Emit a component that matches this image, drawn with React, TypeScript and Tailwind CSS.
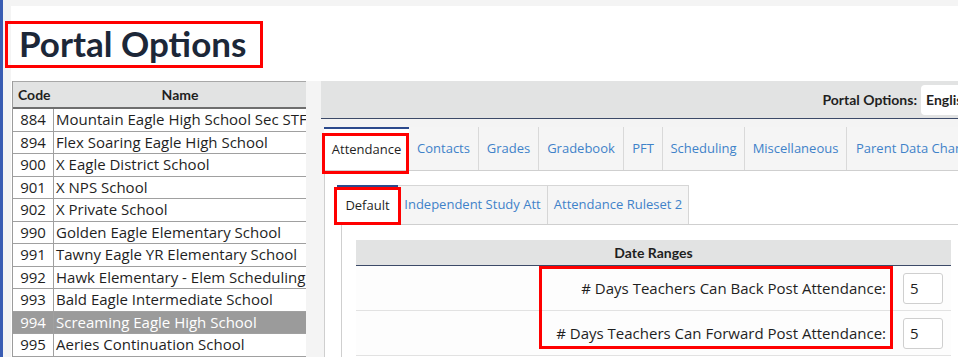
import React from "react";

const schools: [string, string][] = [
  ["884", "Mountain Eagle High School Sec STF"],
  ["894", "Flex Soaring Eagle High School"],
  ["900", "X Eagle District School"],
  ["901", "X NPS School"],
  ["902", "X Private School"],
  ["990", "Golden Eagle Elementary School"],
  ["991", "Tawny Eagle YR Elementary School"],
  ["992", "Hawk Elementary - Elem Scheduling"],
  ["993", "Bald Eagle Intermediate School"],
  ["994", "Screaming Eagle High School"],
  ["995", "Aeries Continuation School"],
];

const tabs: [string, string][] = [
  ["Contacts", "w-[70px] justify-center"],
  ["Grades", "w-[60px] justify-center"],
  ["Gradebook", "w-[85px] justify-center"],
  ["PFT", "w-[39px] justify-center"],
  ["Scheduling", "w-[82px] justify-center"],
  ["Miscellaneous", "w-[102px] justify-center"],
  ["Parent Data Changes", "w-[140px] justify-start pl-[9px]"],
];

const lato = { fontFamily: "Lato, 'Open Sans', sans-serif" };

export default function App() {
  return (
    <div
      className="w-[958px] h-[357px] overflow-hidden bg-[#f4f4f4] flex text-[#1f1f1f]"
      style={{ fontFamily: "'Open Sans', 'Noto Sans', sans-serif" }}
    >
      <div className="w-[3px] shrink-0 bg-[#3a5db3]" />
      <div className="flex-1 pl-[8px] pt-[6px] flex flex-col min-w-0">
        {/* Title */}
        <div className="h-[75px] bg-white relative shrink-0">
          <h1
            className="absolute left-[8px] top-[17px] text-[35px] leading-[40px] font-bold text-[#1c2738]"
            style={lato}
          >
            Portal Options
          </h1>
          <div className="absolute left-[-6px] top-[15px] w-[258px] h-[47px] border-[3px] border-[#ff0000]" />
        </div>
        <div className="flex flex-1 min-h-0">
          {/* School table */}
          <div className="w-[295px] shrink-0 bg-white pl-[1px]">
            <div className="border-l border-[#9c9c9c] text-[15px]">
              <div
                className="flex h-[28px] bg-[#e2e3e3] border-t border-b-[2px] border-t-[#a8a8a8] border-b-[#6e6e6e] font-bold text-[14px]"
                style={lato}
              >
                <div className="w-[41px] pl-[5px] flex items-center">Code</div>
                <div className="flex-1 flex items-center justify-center">Name</div>
              </div>
              {schools.map(([code, name]) => {
                const sel = code === "994";
                return (
                  <div
                    key={code}
                    className={`flex h-[22.5px] border-b border-[#a0a0a0] ${
                      sel ? "bg-[#9b9b9b] text-white" : "bg-white"
                    }`}
                  >
                    <div className="w-[41px] shrink-0 border-r border-[#a0a0a0] flex items-center justify-center leading-none">
                      {code}
                    </div>
                    <div className="flex-1 pl-[2px] flex items-center whitespace-nowrap overflow-hidden leading-none">
                      {name}
                    </div>
                  </div>
                );
              })}
            </div>
          </div>
          <div className="w-[15px] shrink-0 bg-[#f4f4f4]" />
          {/* Right panel */}
          <div className="flex-1 min-w-0 flex flex-col overflow-hidden">
            <div className="h-[38px] shrink-0 bg-[#e2e3e3] border-b border-[#3c4a68] flex items-center justify-end overflow-hidden">
              <span className="font-bold text-[14px] mr-[4px]" style={lato}>
                Portal Options:
              </span>
              <div
                className="w-[80px] h-[30px] mr-[-43px] bg-white rounded-[4px] flex items-center pl-[5px] text-[14px] font-bold shrink-0"
                style={lato}
              >
                English
              </div>
            </div>
            <div className="pt-[8px] pl-[3px] flex flex-col flex-1 min-h-0">
              {/* main tabs */}
              <div className="flex h-[44px] shrink-0 border-b border-[#cfcfcf] text-[13px]">
                <div className="relative w-[85px] shrink-0 bg-white border-t-[2px] border-[#2c4a8c] flex items-center justify-center">
                  Attendance
                  <div className="absolute left-[-2px] top-[4px] w-[87px] h-[41px] border-[3px] border-[#ff0000]" />
                </div>
                {tabs.map(([t, w]) => (
                  <div
                    key={t}
                    className={`${w} shrink-0 bg-[#f5f5f5] border-r border-[#d9d9d9] flex items-center whitespace-nowrap text-[#3f82c9]`}
                  >
                    {t}
                  </div>
                ))}
              </div>
              {/* content */}
              <div className="flex-1 bg-white border-l border-[#cfcfcf] pl-[12px] pt-[14px] flex flex-col">
                <div className="flex h-[40px] shrink-0 border-b border-[#cfcfcf] text-[13px]">
                  <div className="relative w-[61px] shrink-0 bg-white border-t-[2px] border-[#2c4a8c] flex items-center justify-center">
                    Default
                    <div className="absolute left-[-3px] top-[0px] w-[67px] h-[38px] border-[3px] border-[#ff0000]" />
                  </div>
                  <div className="w-[150px] shrink-0 bg-[#f5f5f5] border-t border-r border-[#d6d6d6] flex items-center justify-center text-[#3f82c9] whitespace-nowrap">
                    Independent Study Att
                  </div>
                  <div className="w-[141px] shrink-0 bg-[#f5f5f5] border-t border-r border-[#d6d6d6] flex items-center justify-center text-[#3f82c9] whitespace-nowrap">
                    Attendance Ruleset 2
                  </div>
                </div>
                <div className="flex-1 ml-[4px] border-l border-[#cfcfcf] pl-[14px] pt-[15px] pr-[8px]">
                  <div className="w-[595px] text-[15px]">
                    <div
                      className="h-[26px] bg-[#e2e3e3] border-b border-[#3c4a68] flex items-center justify-center font-bold text-[14px]"
                      style={lato}
                    >
                      Date Ranges
                    </div>
                    <div className="relative">
                      {[
                        "# Days Teachers Can Back Post Attendance:",
                        "# Days Teachers Can Forward Post Attendance:",
                      ].map((l) => (
                        <div key={l} className="flex h-[45px] border-b border-[#e2e2e2] bg-[#fdfdfd]">
                          <div className="flex-1 flex items-center justify-end pr-[7px] whitespace-nowrap">{l}</div>
                          <div className="w-[58px] shrink-0 flex items-center pl-[10px]">
                            <div className="w-[40px] h-[31px] border border-[#cfcfcf] rounded-[3px] bg-white flex items-center pl-[6px] text-[15px]">
                              5
                            </div>
                          </div>
                        </div>
                      ))}
                      <div className="absolute left-[183px] top-[0px] w-[354px] h-[83px] border-[3px] border-[#ff0000]" />
                    </div>
                  </div>
                </div>
              </div>
            </div>
          </div>
        </div>
      </div>
    </div>
  );
}
